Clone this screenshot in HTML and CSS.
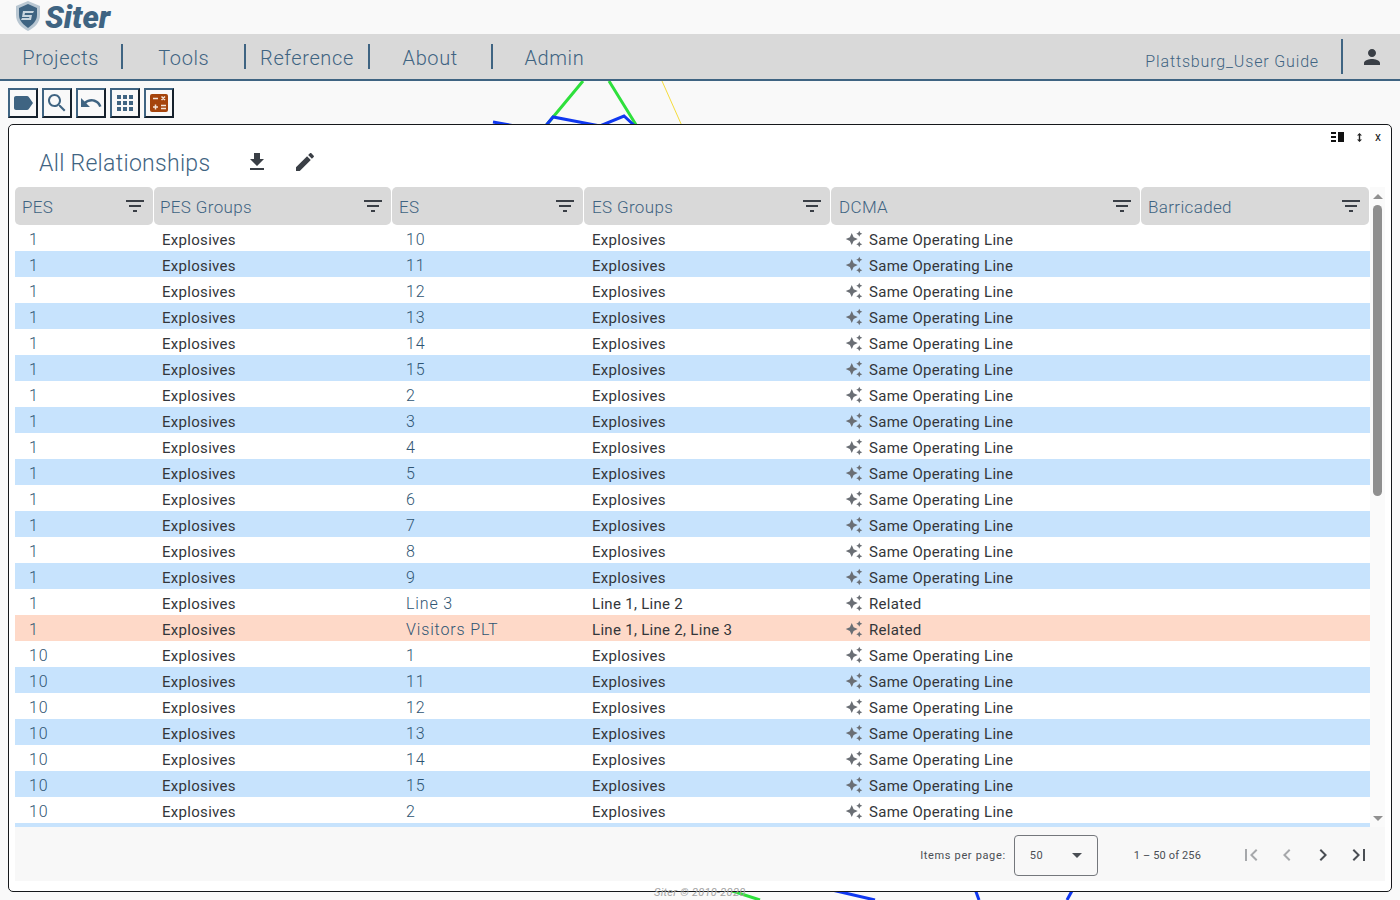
FILE: index.html
```html
<!DOCTYPE html>
<html lang="en">
<head>
    <meta charset="UTF-8">
    <title>Siter</title>
    <link rel="stylesheet" href="styles.css">
</head>
<body>
    <svg class="defs" width="0" height="0">
        <symbol id="i-label" viewBox="0 0 24 24"><path d="M17.63 5.84C17.27 5.33 16.67 5 16 5L5 5.01C3.9 5.01 3 5.9 3 7v10c0 1.1.9 1.99 2 1.99L16 19c.67 0 1.27-.33 1.63-.84L22 12l-4.37-6.16z"/></symbol>
        <symbol id="i-search" viewBox="0 0 24 24"><path d="M15.5 14h-.79l-.28-.27C15.41 12.59 16 11.11 16 9.5 16 5.91 13.09 3 9.5 3S3 5.91 3 9.5 5.91 16 9.5 16c1.61 0 3.09-.59 4.23-1.57l.27.28v.79l5 4.99L20.49 19l-4.99-5zm-6 0C7.01 14 5 11.99 5 9.5S7.01 5 9.5 5 14 7.01 14 9.5 11.99 14 9.5 14z"/></symbol>
        <symbol id="i-undo" viewBox="0 0 24 24"><path d="M12.5 8c-2.65 0-5.05.99-6.9 2.6L2 7v9h9l-3.62-3.62c1.39-1.16 3.16-1.88 5.12-1.88 3.54 0 6.55 2.31 7.6 5.5l2.37-.78C21.08 11.03 17.15 8 12.5 8z"/></symbol>
        <symbol id="i-apps" viewBox="0 0 24 24"><path d="M4 8h4V4H4v4zm6 12h4v-4h-4v4zm-6 0h4v-4H4v4zm0-6h4v-4H4v4zm6 0h4v-4h-4v4zm6-10v4h4V4h-4zm-6 4h4V4h-4v4zm6 6h4v-4h-4v4zm0 6h4v-4h-4v4z"/></symbol>
        <symbol id="i-download" viewBox="0 0 24 24"><path d="M19 9h-4V3H9v6H5l7 7 7-7zM5 18v2h14v-2H5z"/></symbol>
        <symbol id="i-edit" viewBox="0 0 24 24"><path d="M3 17.25V21h3.75L17.81 9.94l-3.75-3.75L3 17.25zM20.71 7.04c.39-.39.39-1.02 0-1.41l-2.34-2.34c-.39-.39-1.02-.39-1.41 0l-1.83 1.83 3.75 3.75 1.83-1.83z"/></symbol>
        <symbol id="i-person" viewBox="0 0 24 24"><path d="M12 12c2.21 0 4-1.79 4-4s-1.79-4-4-4-4 1.79-4 4 1.79 4 4 4zm0 2c-2.67 0-8 1.34-8 4v2h16v-2c0-2.66-5.33-4-8-4z"/></symbol>
        <symbol id="i-filter" viewBox="0 0 24 24"><path d="M10 18h4v-2h-4v2zM3 6v2h18V6H3zm3 7h12v-2H6v2z"/></symbol>
        <symbol id="i-spark" viewBox="0 0 24 24"><path d="M19 9l1.25-2.75L23 5l-2.75-1.25L19 1l-1.25 2.75L15 5l2.75 1.25L19 9zm-7.5.5L9 4 6.5 9.5 1 12l5.5 2.5L9 20l2.5-5.5L17 12l-5.5-2.5zM19 15l-1.25 2.75L15 19l2.75 1.25L19 23l1.25-2.75L23 19l-2.75-1.25L19 15z"/></symbol>
        <symbol id="i-first" viewBox="0 0 24 24"><path d="M18.41 16.59L13.82 12l4.59-4.59L17 6l-6 6 6 6zM6 6h2v12H6z"/></symbol>
        <symbol id="i-prev" viewBox="0 0 24 24"><path d="M15.41 7.41L14 6l-6 6 6 6 1.41-1.41L10.83 12z"/></symbol>
        <symbol id="i-next" viewBox="0 0 24 24"><path d="M10 6L8.59 7.41 13.17 12l-4.58 4.59L10 18l6-6z"/></symbol>
        <symbol id="i-last" viewBox="0 0 24 24"><path d="M5.59 7.41L10.18 12l-4.59 4.59L7 18l6-6-6-6zM16 6h2v12h-2z"/></symbol>
    </svg>

    <!-- graph behind the panel -->
    <svg class="graph" width="1400" height="900">
        <g fill="none" stroke-width="3">
            <path stroke="#2ee03c" d="M583 81L544 128M609 81L638 128M726 889L760 900"/>
            <path stroke="#1038f0" d="M493 122L515 126M544 128L553 117L600 126L624 116L637 128M832 890L875 900M975 889L979 900M1073 889L1067 900"/>
            <path stroke="#f5dc3c" stroke-width="1" d="M662 81L682 126"/>
        </g>
    </svg>

    <div class="logo-bar">
        <svg class="logo-mark" width="28" height="32" viewBox="0 0 28 32">
            <path d="M14 1L26 6V15C26 23 20 28 14 31C8 28 2 23 2 15V6Z" fill="#b9c7d2"/>
            <path d="M14 4L23 8V15C23 21 18 25 14 28C10 25 5 21 5 15V8Z" fill="#3f6482"/>
            <path d="M9 11H20L19 13H11L10.500 15H18L17 20H7L8 18H15L15.500 17H8Z" fill="#c9d5de"/>
        </svg>
        <span class="logo-text">Siter</span>
    </div>

    <div class="nav">
        <a class="nav-item">Projects</a>
        <a class="nav-item">Tools</a>
        <a class="nav-item">Reference</a>
        <a class="nav-item">About</a>
        <a class="nav-item last">Admin</a>
        <div class="nav-right">
            <span class="project-name">Plattsburg_User Guide</span>
            <span class="user"><svg width="24" height="24"><use href="#i-person"/></svg></span>
        </div>
    </div>

    <div class="toolbar">
        <button class="tool"><svg width="24" height="24"><use href="#i-label"/></svg></button>
        <button class="tool"><svg width="24" height="24"><use href="#i-search"/></svg></button>
        <button class="tool"><svg width="24" height="24"><use href="#i-undo"/></svg></button>
        <button class="tool"><svg width="24" height="24"><use href="#i-apps"/></svg></button>
        <button class="tool"><svg class="calc" width="18" height="18" viewBox="0 0 18 18">
            <rect width="18" height="18" rx="2" fill="#a5440c"/>
            <path d="M3 4.500H8M3 13H8M5.500 10.500V15.500M11 11.500H16M11 14.500H16M11.500 2.500L15 6M15 2.500L11.500 6" stroke="#f4e4d8" stroke-width="1.500" fill="none"/>
        </svg></button>
    </div>

    <div class="panel">
        <div class="panel-ctl">
            <svg width="13" height="10" viewBox="0 0 13 10"><path d="M0 0H5V2H0ZM0 4H5V6H0ZM0 8H5V10H0ZM7 0H13V10H7Z" fill="#111"/></svg>
            <svg class="resize" width="5" height="9" viewBox="0 0 5 9"><path d="M2.500 0L5 2.500H3.200V6.500H5L2.500 9L0 6.500H1.800V2.500H0Z" fill="#222"/></svg>
            <span class="close">x</span>
        </div>
        <div class="panel-title">
            <h2>All Relationships</h2>
            <svg class="title-icon" width="24" height="24"><use href="#i-download"/></svg>
            <svg class="title-icon" width="24" height="24"><use href="#i-edit"/></svg>
        </div>
        <div class="table-wrap">
            <div class="table-clip">
                <table>
                    <colgroup><col class="c1"><col class="c2"><col class="c3"><col class="c4"><col class="c5"><col class="c6"></colgroup>
                    <thead>
                        <tr>
                            <th><div class="th-in">PES<svg width="24" height="24"><use href="#i-filter"/></svg></div></th>
                            <th><div class="th-in">PES Groups<svg width="24" height="24"><use href="#i-filter"/></svg></div></th>
                            <th><div class="th-in">ES<svg width="24" height="24"><use href="#i-filter"/></svg></div></th>
                            <th><div class="th-in">ES Groups<svg width="24" height="24"><use href="#i-filter"/></svg></div></th>
                            <th><div class="th-in">DCMA<svg width="24" height="24"><use href="#i-filter"/></svg></div></th>
                            <th><div class="th-in">Barricaded<svg width="24" height="24"><use href="#i-filter"/></svg></div></th>
                        </tr>
                    </thead>
                    <tbody id="rows"></tbody>
                </table>
            </div>
            <div class="scrollbar">
                <span class="arrow up"></span>
                <span class="track"><span class="thumb"></span></span>
                <span class="arrow down"></span>
            </div>
        </div>
        <div class="pager">
            <span class="pager-label">Items per page:</span>
            <div class="select"><span>50</span><i class="caret"></i></div>
            <span class="range">1 – 50 of 256</span>
            <svg class="off" width="24" height="24"><use href="#i-first"/></svg>
            <svg class="off" width="24" height="24"><use href="#i-prev"/></svg>
            <svg width="24" height="24"><use href="#i-next"/></svg>
            <svg width="24" height="24"><use href="#i-last"/></svg>
        </div>
    </div>

    <div class="copyright">Siter © 2010-2020</div>

    <script>
        // PES, PES Groups, ES, ES Groups, DCMA, row class
        const same = "Same Operating Line";
        const data = [];
        ["10","11","12","13","14","15","2","3","4","5","6","7","8","9"].forEach(function (es) {
            data.push(["1", "Explosives", es, "Explosives", same]);
        });
        data.push(["1", "Explosives", "Line 3", "Line 1, Line 2", "Related"]);
        data.push(["1", "Explosives", "Visitors PLT", "Line 1, Line 2, Line 3", "Related", "warn"]);
        ["1","11","12","13","14","15","2"].forEach(function (es) {
            data.push(["10", "Explosives", es, "Explosives", same]);
        });
        // last row is scrolled almost out of view, only its top shows
        data.push(["", "", "", "", ""]);

        let html = "";
        data.forEach(function (d) {
            html += '<tr class="' + (d[5] || "") + '">' +
                '<td class="num">' + d[0] + '</td>' +
                '<td>' + d[1] + '</td>' +
                '<td class="num">' + d[2] + '</td>' +
                '<td>' + d[3] + '</td>' +
                '<td class="dcma"><svg width="18" height="18"><use href="#i-spark"/></svg>' + d[4] + '</td>' +
                '<td></td></tr>';
        });
        document.getElementById("rows").innerHTML = html;
    </script>
</body>
</html>
```

FILE: styles.css
```css
* {
    margin: 0;
    padding: 0;
    box-sizing: border-box;
}
html, body {
    width: 100%;
    height: 100%;
    overflow: hidden;
}
body {
    font-family: Roboto, "Liberation Sans", sans-serif;
    background: #f9f9f9;
    color: #3f6482;
    display: flex;
    flex-direction: column;
}
svg {
    fill: currentColor;
    flex: none;
}
.defs {
    position: absolute;
}
.graph {
    position: absolute;
    top: 0;
    left: 0;
}
.logo-bar {
    position: relative;
    height: 34px;
    display: flex;
    align-items: center;
    padding-left: 14px;
    gap: 3px;
}
.logo-mark {
    margin-bottom: 2px;
}
.logo-text {
    font-size: 31px;
    line-height: 32px;
    font-weight: 900;
    font-style: italic;
    margin-top: 2px;
}
.nav {
    position: relative;
    height: 47px;
    background: #d9d9d9;
    border-bottom: 2px solid #3f6482;
    display: flex;
    align-items: flex-start;
    padding-top: 10px;
}
.nav-item {
    width: 123.2px;
    height: 25px;
    line-height: 29px;
    text-align: center;
    font-size: 20px;
    font-weight: 300;
    letter-spacing: 0.6px;
    border-right: 2px solid #3f6482;
}
.nav-item.last {
    border-right: 0;
}
.nav-right {
    margin-left: auto;
    display: flex;
    align-items: flex-start;
    margin-top: -5px;
}
.project-name {
    font-size: 16px;
    font-weight: 300;
    letter-spacing: 0.85px;
    line-height: 46px;
    padding-right: 22px;
    border-right: 2px solid #3f6482;
    height: 35px;
}
.user {
    width: 57px;
    display: flex;
    justify-content: center;
    padding-top: 6px;
    color: #3a3f46;
}
.toolbar {
    position: relative;
    display: flex;
    gap: 4px;
    height: 43px;
    padding: 7px 0 0 8px;
}
.tool {
    width: 30px;
    height: 30px;
    background: #f9f9f9;
    color: #3f6482;
    border: 2px solid;
    border-color: #3f6482 #16212c #16212c #3f6482;
    display: flex;
    align-items: center;
    justify-content: center;
}
.panel {
    position: relative;
    height: 768px;
    margin: 0 8px;
    background: #fff;
    border: 1px solid #16181b;
    border-radius: 5px;
    padding: 0 6px 10px;
    display: flex;
    flex-direction: column;
}
.panel-ctl {
    height: 24px;
    display: flex;
    align-items: center;
    justify-content: flex-end;
    gap: 13px;
    padding-right: 4px;
    font-size: 12px;
    color: #222;
}
.panel-title {
    height: 28px;
    display: flex;
    align-items: center;
    padding-left: 24px;
    gap: 24px;
    margin-bottom: 10px;
}
.panel-title h2 {
    font-size: 23px;
    font-weight: 300;
    width: 182px;
    letter-spacing: 0.3px;
}
.title-icon {
    color: #3a3f46;
    margin-top: -2px;
}
.table-wrap {
    display: flex;
    height: 640px;
}
.table-clip {
    width: 1355px;
    overflow: hidden;
}
table {
    width: 1355px;
    table-layout: fixed;
    border-collapse: collapse;
}
.c1 { width: 139px; }
.c2 { width: 238px; }
.c3 { width: 192px; }
.c4 { width: 247px; }
.c5 { width: 310px; }
.c6 { width: 229px; }
th {
    height: 38px;
    padding: 0;
    font-weight: 300;
    font-size: 17px;
    text-align: left;
}
.th-in {
    height: 38px;
    margin-right: 1px;
    background: #d9d9d9;
    border-radius: 5px;
    display: flex;
    align-items: center;
    justify-content: space-between;
    padding: 2px 6px 0 7px;
    letter-spacing: 0.35px;
}
th:nth-child(2) .th-in {
    padding-left: 6px;
}
th:nth-child(4) .th-in,
th:nth-child(5) .th-in {
    padding-left: 8px;
}
.th-in svg {
    color: #3a3f46;
    margin-top: -3px;
}
td {
    height: 26px;
    padding: 3px 0 0 8px;
    font-size: 15px;
    letter-spacing: 0.3px;
    color: #33363a;
    white-space: nowrap;
}
td.num {
    padding: 3px 0 0 14px;
    font-size: 16px;
    font-weight: 300;
    color: #2f5573;
    letter-spacing: 0.85px;
}
td.dcma {
    padding: 2px 0 0 14px;
}
td.dcma svg {
    vertical-align: -3px;
    margin-right: 6px;
    color: #6a6e74;
}
tbody tr:nth-child(even) {
    background: #c7e3fd;
}
tbody tr.warn {
    background: #fed9c8;
}
.scrollbar {
    width: 15px;
    display: flex;
    flex-direction: column;
    align-items: center;
    background: #fafafa;
}
.arrow {
    width: 0;
    height: 0;
    border-left: 5px solid transparent;
    border-right: 5px solid transparent;
}
.arrow.up {
    border-bottom: 5px solid #8f8f8f;
    margin-top: 7px;
}
.arrow.down {
    border-top: 5px solid #8f8f8f;
    margin-bottom: 6px;
}
.track {
    flex: 1;
    width: 9px;
    padding-top: 6px;
}
.thumb {
    display: block;
    height: 291px;
    background: #8f8f8f;
    border-radius: 5px;
}
.pager {
    height: 54px;
    background: #f8f8f8;
    display: flex;
    align-items: center;
    justify-content: flex-end;
    padding: 2px 14px 0 0;
    color: #4a4e54;
    gap: 12px;
}
.pager-label {
    font-size: 11px;
    letter-spacing: 0.65px;
    margin-right: -4px;
}
.select {
    width: 84px;
    height: 41px;
    border: 1px solid #74777c;
    border-radius: 4px;
    display: flex;
    align-items: center;
    justify-content: space-between;
    padding: 0 15px;
    font-size: 11px;
    letter-spacing: 0.5px;
}
.caret {
    width: 0;
    height: 0;
    border-left: 5px solid transparent;
    border-right: 5px solid transparent;
    border-top: 5px solid #4a4e54;
}
.range {
    font-size: 11px;
    letter-spacing: 0.15px;
    margin: 0 26px 0 24px;
}
.off {
    color: #a6a8ab;
}
.copyright {
    position: absolute;
    top: 886px;
    left: 654px;
    font-size: 11px;
    font-style: italic;
    letter-spacing: 0.3px;
    color: #a3a3a3;
}
```
